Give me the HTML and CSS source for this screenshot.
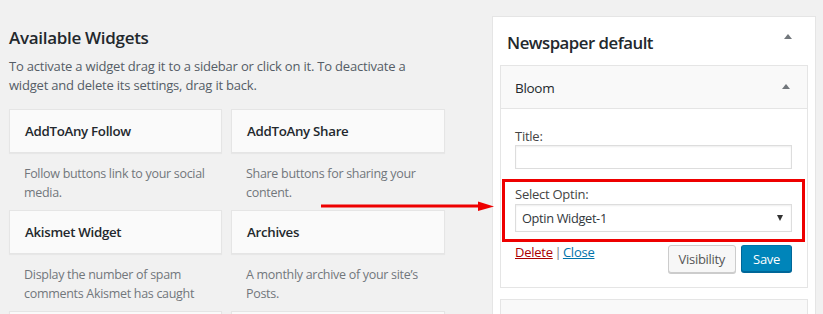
FILE: index.html
```html
<!DOCTYPE html>
<html lang="en">
<head>
    <meta charset="UTF-8">
    <title>Widgets</title>
    <link rel="stylesheet" href="styles.css">
</head>
<body>
    <div class="available">
        <h2 class="available-title">Available Widgets</h2>
        <p class="available-desc">To activate a widget drag it to a sidebar or click on it. To deactivate a widget and delete its settings, drag it back.</p>

        <div class="widget-grid">
            <div class="widget-item">
                <div class="widget-card"><h3>AddToAny Follow</h3></div>
                <p class="widget-desc">Follow buttons link to your social media.</p>
            </div>
            <div class="widget-item">
                <div class="widget-card"><h3>AddToAny Share</h3></div>
                <p class="widget-desc">Share buttons for sharing your content.</p>
            </div>
            <div class="widget-item">
                <div class="widget-card"><h3>Akismet Widget</h3></div>
                <p class="widget-desc">Display the number of spam comments Akismet has caught</p>
            </div>
            <div class="widget-item">
                <div class="widget-card"><h3>Archives</h3></div>
                <p class="widget-desc">A monthly archive of your site’s Posts.</p>
            </div>
            <div class="widget-item">
                <div class="widget-card"></div>
            </div>
            <div class="widget-item">
                <div class="widget-card"></div>
            </div>
        </div>
    </div>

    <div class="sidebar">
        <div class="sidebar-head">
            <h2>Newspaper default</h2>
            <span class="toggle"></span>
        </div>

        <div class="widget-open">
            <div class="widget-top">
                <h3>Bloom</h3>
                <span class="toggle"></span>
            </div>
            <div class="widget-inside">
                <label class="field-label">Title:</label>
                <div class="text-input"></div>

                <div class="highlight">
                    <label class="field-label">Select Optin:</label>
                    <div class="select-box">
                        <span>Optin Widget-1</span>
                        <span class="select-arrow"></span>
                    </div>
                </div>

                <div class="widget-actions">
                    <div class="links">
                        <a href="#" class="link-delete">Delete</a> | <a href="#" class="link-close">Close</a>
                    </div>
                    <div class="buttons">
                        <button class="btn">Visibility</button>
                        <button class="btn btn-primary">Save</button>
                    </div>
                </div>
            </div>
        </div>

        <div class="widget-next"></div>
    </div>

    <!-- annotation arrow -->
    <svg class="arrow" width="180" height="14" viewBox="0 0 180 14">
        <line x1="1" y1="7" x2="162" y2="7" stroke="#ee0000" stroke-width="3"/>
        <polygon points="158,2.5 174,7.5 158,12" fill="#ee0000"/>
    </svg>
</body>
</html>
```

FILE: styles.css
```css
* {
    margin: 0;
    padding: 0;
    box-sizing: border-box;
}

body {
    font-family: 'Open Sans', 'Noto Sans', sans-serif;
    background: #f1f1f1;
    color: #23282d;
    display: flex;
    align-items: flex-start;
    height: 314px;
    overflow: hidden;
    position: relative;
}

/* left column */
.available {
    width: 436px;
    margin-left: 9px;
    padding-top: 26px;
}

.available-title {
    font-size: 17px;
    font-weight: 600;
    letter-spacing: -0.3px;
    line-height: 24px;
    margin-bottom: 7px;
}

.available-desc {
    font-size: 13px;
    letter-spacing: -0.2px;
    line-height: 19px;
    color: #555d66;
    margin-bottom: 14px;
}

.widget-grid {
    display: grid;
    grid-template-columns: 213px 214px;
    column-gap: 9px;
}

.widget-item {
    height: 101px;
}

.widget-card {
    height: 44px;
    background: #fafafa;
    border: 1px solid #e5e5e5;
    box-shadow: 0 1px 1px rgba(0, 0, 0, 0.04);
    padding: 0 15px;
    display: flex;
    align-items: center;
}

.widget-card h3 {
    font-size: 13.3px;
    font-weight: 600;
    letter-spacing: -0.3px;
}

.widget-desc {
    font-size: 12.5px;
    letter-spacing: -0.3px;
    line-height: 18.5px;
    color: #72777c;
    padding: 12px 15px 0;
}

/* right column */
.sidebar {
    width: 324px;
    margin-left: 47px;
    margin-top: 16px;
    height: 320px;
    background: #fff;
    border: 1px solid #e5e5e5;
    padding: 0 7px;
}

.sidebar-head {
    height: 48px;
    display: flex;
    align-items: center;
    justify-content: space-between;
    padding: 2px 16px 0 7px;
}

.sidebar-head h2 {
    font-size: 16.8px;
    font-weight: 600;
    letter-spacing: -0.5px;
}

.toggle {
    width: 0;
    height: 0;
    border-left: 4px solid transparent;
    border-right: 4px solid transparent;
    border-bottom: 5px solid #72777c;
    margin-top: -12px;
}

.widget-open {
    border: 1px solid #e5e5e5;
}

.widget-top {
    height: 43px;
    background: #f9f9f9;
    border-bottom: 1px solid #e5e5e5;
    display: flex;
    align-items: center;
    justify-content: space-between;
    padding: 1px 17px 0 14px;
}

.widget-top h3 {
    font-size: 13.5px;
    font-weight: 500;
    letter-spacing: -0.3px;
}

.widget-top .toggle {
    margin-top: -3px;
}

.widget-inside {
    padding: 18px 15px 14px 14px;
}

.field-label {
    display: block;
    font-size: 13px;
    letter-spacing: -0.25px;
    line-height: 18px;
    color: #444;
}

.text-input {
    height: 24px;
    border: 1px solid #ddd;
    box-shadow: inset 0 1px 2px rgba(0, 0, 0, 0.07);
}

.highlight {
    margin: 10px -13px 0;
    border: 3px solid #ee0000;
    padding: 3px 10px 7px;
}

.highlight .field-label {
    margin-bottom: 1px;
}

.select-box {
    height: 28px;
    border: 1px solid #ddd;
    box-shadow: inset 0 1px 2px rgba(0, 0, 0, 0.07);
    display: flex;
    align-items: center;
    justify-content: space-between;
    padding: 0 8px 0 6px;
    font-size: 12.8px;
    letter-spacing: -0.35px;
    color: #32373c;
}

.select-arrow {
    width: 0;
    height: 0;
    border-left: 3.5px solid transparent;
    border-right: 3.5px solid transparent;
    border-top: 6px solid #333;
}

.widget-actions {
    display: flex;
    justify-content: space-between;
    align-items: flex-start;
    margin-top: 1px;
}

.links {
    font-size: 13px;
    letter-spacing: -0.25px;
    word-spacing: -1.5px;
    line-height: 18px;
    color: #72777c;
}

.link-delete {
    color: #a00;
}

.link-close {
    color: #0073aa;
}

.buttons {
    display: flex;
    gap: 5px;
    margin-top: 2px;
}

.btn {
    font-family: inherit;
    font-size: 13px;
    letter-spacing: -0.3px;
    height: 28px;
    padding: 0 10px;
    border: 1px solid #ccc;
    border-radius: 3px;
    background: #f7f7f7;
    color: #555;
    box-shadow: 0 1px 0 #ccc;
}

.btn-primary {
    height: 27px;
    background: #0085ba;
    border-color: #0073aa #006799 #006799;
    color: #fff;
    box-shadow: 0 1px 0 #006799;
    padding: 0 11px;
}

.widget-next {
    margin-top: 11px;
    height: 40px;
    background: #f9f9f9;
    border: 1px solid #e5e5e5;
}

.arrow {
    position: absolute;
    left: 320px;
    top: 199px;
}
```
